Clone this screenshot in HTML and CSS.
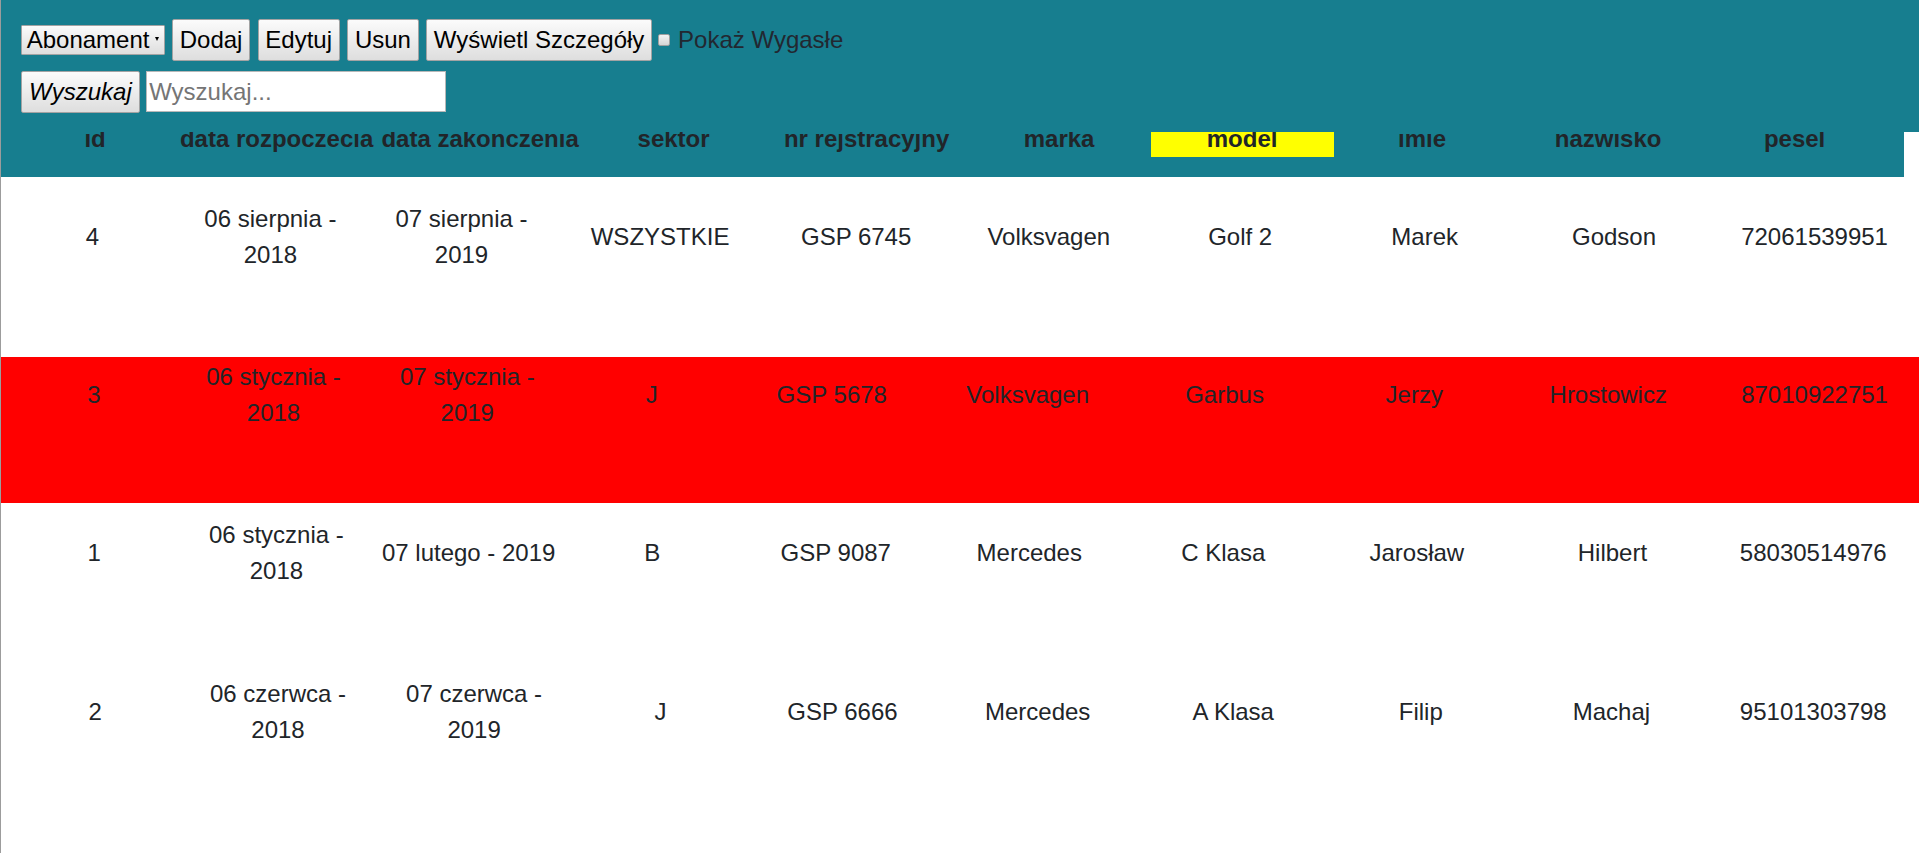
FILE: index.html
```html
<!DOCTYPE html>
<html lang="pl">
<head>
<meta charset="utf-8">
<title>Abonamenty</title>
<link rel="stylesheet" href="styles.css">
</head>
<body>
<header class="toolbar">
  <div class="tool-row">
    <button class="btn select">Abonament<span class="caret"></span></button>
    <button class="btn">Dodaj</button>
    <button class="btn">Edytuj</button>
    <button class="btn">Usun</button>
    <button class="btn">Wyświetl Szczegóły</button>
    <label class="check"><input type="checkbox" class="box"><span>Pokaż Wygasłe</span></label>
  </div>
  <div class="tool-row search-row">
    <button class="btn italic">Wyszukaj</button>
    <input class="search" type="text" placeholder="Wyszukaj...">
  </div>
</header>
<main class="content">
  <div class="thead">
    <div class="th">id</div>
    <div class="th">data rozpoczecia</div>
    <div class="th">data zakonczenia</div>
    <div class="th">sektor</div>
    <div class="th">nr rejstracyjny</div>
    <div class="th">marka</div>
    <div class="th"><span class="mark">model</span></div>
    <div class="th">imie</div>
    <div class="th">nazwisko</div>
    <div class="th">pesel</div>
  </div>
  <div class="tbody">
    <div class="tr r1">
      <div>4</div>
      <div>06 sierpnia - 2018</div>
      <div>07 sierpnia - 2019</div>
      <div>WSZYSTKIE</div>
      <div>GSP 6745</div>
      <div>Volksvagen</div>
      <div>Golf 2</div>
      <div>Marek</div>
      <div>Godson</div>
      <div>72061539951</div>
    </div>
    <div class="tr r2 expired">
      <div>3</div>
      <div>06 stycznia - 2018</div>
      <div>07 stycznia - 2019</div>
      <div>J</div>
      <div>GSP 5678</div>
      <div>Volksvagen</div>
      <div>Garbus</div>
      <div>Jerzy</div>
      <div>Hrostowicz</div>
      <div>87010922751</div>
    </div>
    <div class="tr r3">
      <div>1</div>
      <div>06 stycznia - 2018</div>
      <div>07 lutego - 2019</div>
      <div>B</div>
      <div>GSP 9087</div>
      <div>Mercedes</div>
      <div>C Klasa</div>
      <div>Jarosław</div>
      <div>Hilbert</div>
      <div>58030514976</div>
    </div>
    <div class="tr r4">
      <div>2</div>
      <div>06 czerwca - 2018</div>
      <div>07 czerwca - 2019</div>
      <div>J</div>
      <div>GSP 6666</div>
      <div>Mercedes</div>
      <div>A Klasa</div>
      <div>Filip</div>
      <div>Machaj</div>
      <div>95101303798</div>
    </div>
  </div>
</main>
</body>
</html>
```
FILE: styles.css
```css
html, body {
  margin: 0;
  padding: 0;
}
body {
  font-family: "Liberation Sans", Arial, sans-serif;
  font-size: 24px;
  line-height: 1.5;
  color: #212529;
  background: #fff;
  border-left: 1px solid #9c9c9c;
  min-height: 100vh;
  box-sizing: border-box;
  overflow: hidden;
}

/* toolbar */
.toolbar {
  position: fixed;
  top: 0;
  left: 1px;
  right: 0;
  height: 132px;
  box-sizing: border-box;
  background: #177e8f;
  padding: 19.3px 0 0 20.3px;
  display: flex;
  flex-direction: column;
  gap: 9.6px;
  z-index: 10;
}
.tool-row {
  display: flex;
  align-items: center;
  gap: 7.3px;
}
.search-row {
  gap: 6.6px;
}
.btn {
  font-family: "Liberation Sans", Arial, sans-serif;
  font-size: 24px;
  line-height: normal;
  color: #000;
  padding: 6px 6.8px;
  margin: 0;
  border: 1px solid #a3a3a3;
  border-radius: 2px;
  background: linear-gradient(#fbfbfb, #dedede);
}
.btn.italic {
  font-style: italic;
  padding: 6px 6.8px;
}
.btn.select {
  height: 30px;
  padding: 0 4.4px 0 4.4px;
  line-height: 28px;
  display: flex;
  align-items: center;
  gap: 5.8px;
  border-radius: 1px;
}
.caret {
  width: 0;
  height: 0;
  border-left: 2.5px solid transparent;
  border-right: 2.5px solid transparent;
  border-top: 4px solid #000;
  margin-top: -2px;
}
.check {
  display: flex;
  align-items: center;
  gap: 7.9px;
  margin-left: -1.3px;
  color: #222831;
  line-height: normal;
}
.box {
  appearance: none;
  -webkit-appearance: none;
  width: 12px;
  height: 12px;
  margin: 0;
  box-sizing: border-box;
  border: 1px solid #a0a0a0;
  border-radius: 2px;
  background: linear-gradient(#f3f3f3, #d6d6d6);
}
.search {
  width: 299.4px;
  height: 41px;
  box-sizing: border-box;
  border: 1px solid #b8b8b8;
  padding: 0 2px;
  margin: 0;
  font-family: "Liberation Sans", Arial, sans-serif;
  font-size: 24px;
  color: #000;
  background: #fff;
}
.search::placeholder {
  color: #757575;
}

/* table */
.content {
  padding-top: 100px;
}
.thead {
  width: 1903px;
  box-sizing: border-box;
  background: #177e8f;
  display: grid;
  grid-template-columns: 159px 204px 203px 184px 202px 183px 183px 177px 195px 178px;
  padding: 20.6px 0 20.4px 14.6px;
  font-weight: bold;
  text-align: center;
  line-height: 36px;
  white-space: nowrap;
}
.mark {
  display: block;
  background: #ffff00;
}
.tbody {
  padding-top: 21.7px;
  display: flex;
  flex-direction: column;
  gap: 12.3px;
}
.tr {
  display: grid;
  height: 146px;
  box-sizing: border-box;
  padding-top: 2px;
  align-items: center;
  align-content: start;
  text-align: center;
  line-height: 36px;
}
.tr > div {
  padding: 0 5px;
}
.tr.expired {
  background: #ff0000;
}
.r1 {
  padding-left: 9.6px;
  grid-template-columns: 163.6px 192.4px 189.8px 207.4px 184.8px 200.4px 182.4px 186.6px 192.2px 1fr;
}
.r2 {
  padding-left: 6px;
  grid-template-columns: 173.8px 185.4px 202.2px 166.8px 193.2px 198.6px 195.2px 184.2px 203.8px 1fr;
}
.r3 {
  padding-left: 10.4px;
  grid-template-columns: 165.6px 198.8px 185.8px 181.6px 185.2px 201.8px 186.2px 201px 190.2px 1fr;
}
.r4 {
  padding-left: 10.8px;
  grid-template-columns: 167px 198.4px 193.8px 179px 185px 205.4px 185.8px 189.2px 192.2px 1fr;
}
```
